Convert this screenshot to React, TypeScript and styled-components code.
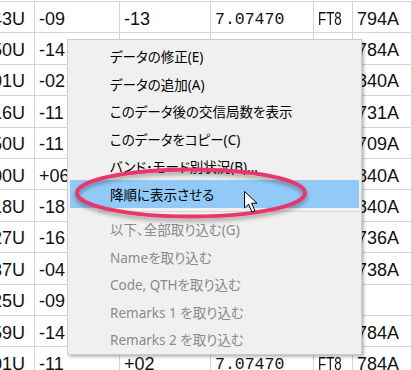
import React from "react";
import styled, { createGlobalStyle } from "styled-components";

const GlobalStyle = createGlobalStyle`
  html, body { margin: 0; padding: 0; background: #ffffff; overflow: hidden; }
  #root { width: 412px; height: 370px; }
`;

const Page = styled.div`
  position: relative;
  width: 412px;
  height: 370px;
  overflow: hidden;
  background: #ffffff;
`;

const Grid = styled.div`
  display: flex;
  flex-direction: column;
  padding-top: 1px;
`;

const Row = styled.div`
  display: grid;
  grid-template-columns: 35px 85px 91px 103px 39px 1fr;
  height: 31.4px;
  box-sizing: border-box;
  border-top: 1px solid #d5d5d5;
`;

const Cell = styled.div<{ $align?: "left" | "right" }>`
  display: flex;
  align-items: center;
  justify-content: ${(p) => (p.$align === "right" ? "flex-end" : "flex-start")};
  box-sizing: border-box;
  border-right: 1px solid #d5d5d5;
  padding: 4px ${(p) => (p.$align === "right" ? "9px" : "0")} 0
    ${(p) => (p.$align === "right" ? "0" : "4px")};
  overflow: hidden;
  white-space: nowrap;
  font-family: "Liberation Sans", Arial, sans-serif;
  font-size: 18px;
  color: #111111;
`;

const Mono = styled.span`
  font-family: "Liberation Mono", "Courier New", monospace;
  font-size: 16.5px;
`;

const Narrow = styled.span`
  display: inline-block;
  transform: scaleX(0.74);
  transform-origin: left center;
`;

const Menu = styled.div`
  position: absolute;
  left: 67px;
  top: 39px;
  width: 295px;
  box-sizing: border-box;
  background: #f0f0f0;
  border: 1px solid #cccccc;
  box-shadow: 2px 2px 3px rgba(0, 0, 0, 0.28);
  padding: 2.5px 2px 1px 2px;
  display: flex;
  flex-direction: column;
`;

const Item = styled.div<{ $active?: boolean; $disabled?: boolean }>`
  height: 27.5px;
  display: flex;
  align-items: center;
  padding-left: 40px;
  background: ${(p) => (p.$active ? "#91c9f7" : "transparent")};
  color: ${(p) => (p.$disabled ? "#8a8a8a" : "#000000")};
  font-family: "Noto Sans", "Noto Sans CJK JP", sans-serif;
  font-size: 13.5px;
  font-feature-settings: "palt" 1;
  white-space: nowrap;
`;

const Separator = styled.div`
  height: 8px;
  display: flex;
  align-items: center;
  padding-left: 28px;
  &::after {
    content: "";
    flex: 1;
    height: 1px;
    background: #d7d7d7;
  }
`;

const Overlay = styled.svg`
  position: absolute;
  left: 0;
  top: 0;
  width: 412px;
  height: 370px;
  pointer-events: none;
`;

type RowData = [string, string, string, string, string, string];

const rows: RowData[] = [
  ["2043U", "-09", "-13", "7.07470", "FT8", "794A"],
  ["2050U", "-14", "-11", "7.07470", "FT8", "784A"],
  ["2101U", "-02", "-05", "7.07470", "FT8", "840A"],
  ["2116U", "-11", "-08", "7.07470", "FT8", "731A"],
  ["2150U", "-11", "-12", "7.07470", "FT8", "709A"],
  ["2200U", "+06", "+01", "7.07470", "FT8", "840A"],
  ["2218U", "-18", "-15", "7.07470", "FT8", "840A"],
  ["2227U", "-16", "-10", "7.07470", "FT8", "736A"],
  ["2237U", "-04", "-07", "7.07470", "FT8", "738A"],
  ["2325U", "-09", "-14", "7.07470", "FT8", ""],
  ["2359U", "-14", "-09", "7.07470", "FT8", "784A"],
  ["0001U", "-11", "+02", "7.07470", "FT8", "784A"],
];

const topItems = [
  "データの修正(E)",
  "データの追加(A)",
  "このデータ後の交信局数を表示",
  "このデータをコピー(C)",
  "バンド･モード別状況(B)...",
];

const bottomItems = [
  "以下、全部取り込む(G)",
  "Nameを取り込む",
  "Code, QTHを取り込む",
  "Remarks 1 を取り込む",
  "Remarks 2 を取り込む",
];

export default function App() {
  return (
    <>
      <GlobalStyle />
      <Page>
        <Grid>
          {rows.map((r, i) => (
            <Row key={i}>
              <Cell $align="right">{r[0]}</Cell>
              <Cell>{r[1]}</Cell>
              <Cell>{r[2]}</Cell>
              <Cell>
                <Mono>{r[3]}</Mono>
              </Cell>
              <Cell>
                <Narrow>{r[4]}</Narrow>
              </Cell>
              <Cell>{r[5]}</Cell>
            </Row>
          ))}
        </Grid>
        <Menu>
          {topItems.map((t) => (
            <Item key={t}>{t}</Item>
          ))}
          <Item $active>降順に表示させる</Item>
          <Separator />
          {bottomItems.map((t) => (
            <Item key={t} $disabled>
              {t}
            </Item>
          ))}
        </Menu>
        <Overlay viewBox="0 0 412 370">
          <defs>
            <filter id="sh" x="-10%" y="-30%" width="120%" height="160%">
              <feDropShadow dx="0" dy="3" stdDeviation="2" floodColor="#000" floodOpacity="0.35" />
            </filter>
          </defs>
          <ellipse
            cx="191"
            cy="193"
            rx="114"
            ry="23.5"
            fill="none"
            stroke="#e8376b"
            strokeWidth="4"
            filter="url(#sh)"
          />
          <path
            d="M244.5 191.5 V208 L248.5 204.2 L252 212 L255 210.8 L251.6 203.2 H257 Z"
            fill="#ffffff"
            stroke="#000000"
            strokeWidth="1"
            strokeLinejoin="miter"
          />
        </Overlay>
      </Page>
    </>
  );
}
